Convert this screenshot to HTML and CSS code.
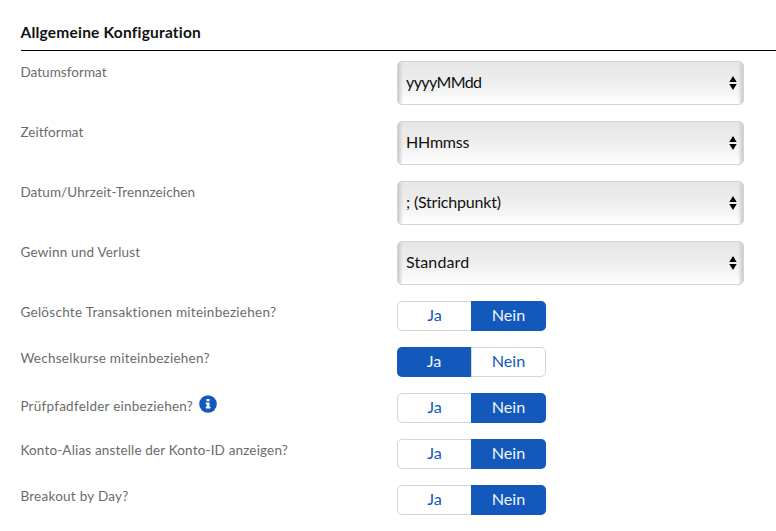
FILE: index.html
```html
<!DOCTYPE html>
<html lang="de">
<head>
<meta charset="utf-8">
<title>Allgemeine Konfiguration</title>
<link rel="stylesheet" href="styles.css">
</head>
<body>
<main class="config">
<h1>Allgemeine Konfiguration</h1>
<div class="row"><div class="label t-date">Datumsformat</div><div class="select"><span class="v-date">yyyyMMdd</span><svg class="arrows" viewBox="0 0 8 16"><path d="M4 1 7.7 7H.3ZM.3 9h7.4L4 15Z"/></svg></div></div>
<div class="row"><div class="label t-time">Zeitformat</div><div class="select"><span class="v-time">HHmmss</span><svg class="arrows" viewBox="0 0 8 16"><path d="M4 1 7.7 7H.3ZM.3 9h7.4L4 15Z"/></svg></div></div>
<div class="row"><div class="label t-sep">Datum/Uhrzeit-Trennzeichen</div><div class="select"><span class="v-sep">; (Strichpunkt)</span><svg class="arrows" viewBox="0 0 8 16"><path d="M4 1 7.7 7H.3ZM.3 9h7.4L4 15Z"/></svg></div></div>
<div class="row"><div class="label t-profit">Gewinn und Verlust</div><div class="select"><span class="v-standard">Standard</span><svg class="arrows" viewBox="0 0 8 16"><path d="M4 1 7.7 7H.3ZM.3 9h7.4L4 15Z"/></svg></div></div>
<div class="row"><div class="label t-deleted">Gelöschte Transaktionen miteinbeziehen?</div><div class="toggle"><span class="option">Ja</span><span class="option active">Nein</span></div></div>
<div class="row"><div class="label t-rates">Wechselkurse miteinbeziehen?</div><div class="toggle"><span class="option active">Ja</span><span class="option">Nein</span></div></div>
<div class="row"><div class="label with-info"><span class="t-audit">Prüfpfadfelder einbeziehen?</span><svg class="info" viewBox="0 0 18 18"><circle cx="9" cy="9" r="8.8" fill="#1359bc"/><path fill="#fff" d="M7.5 3.9h3v2.4h-3ZM6.8 7.4h3.7v4.4h.9v1.8H6.8v-1.8h.9V9.2h-.9Z"/></svg></div><div class="toggle"><span class="option">Ja</span><span class="option active">Nein</span></div></div>
<div class="row"><div class="label t-alias">Konto-Alias anstelle der Konto-ID anzeigen?</div><div class="toggle"><span class="option">Ja</span><span class="option active">Nein</span></div></div>
<div class="row"><div class="label t-break">Breakout by Day?</div><div class="toggle"><span class="option">Ja</span><span class="option active">Nein</span></div></div>
</main>
</body>
</html>
```
FILE: styles.css
```css
* { box-sizing: border-box; }
body {
  margin: 0;
  background: #fff;
  font-family: Lato, "Liberation Sans", sans-serif;
  font-variant-ligatures: none;
  overflow: hidden;
}
.config { padding: 21px 0 0 21px; }
h1 {
  margin: 0 0 10px;
  height: 30px;
  border-bottom: 1px solid #000;
  font-size: 15.5px;
  line-height: 22px;
  font-weight: 700;
  letter-spacing: 0.21px;
  text-indent: -0.5px;
  color: #111;
}
.row {
  display: grid;
  grid-template-columns: 376px 347px;
  align-items: start;
  margin-bottom: 16px;
}
.label {
  font-size: 13.5px;
  line-height: 18px;
  padding-top: 2px;
  text-indent: -0.6px;
  color: #6b6b6b;
  white-space: nowrap;
}
.t-date { letter-spacing: 0.05px; }
.t-time { letter-spacing: 0.03px; }
.t-sep { letter-spacing: 0.1px; }
.t-profit { letter-spacing: 0.2px; }
.t-deleted { letter-spacing: 0.28px; }
.t-rates { letter-spacing: 0.25px; }
.t-audit { letter-spacing: 0.24px; }
.t-alias { letter-spacing: 0.16px; }
.t-break { letter-spacing: 0.25px; }
.v-date { letter-spacing: -0.6px; }
.v-time { letter-spacing: -0.2px; }
.v-sep { letter-spacing: -0.2px; }
.v-standard { letter-spacing: 0.12px; }
.with-info {
  display: flex;
  align-items: center;
  gap: 6px;
  height: 22px;
  padding-top: 0;
}
.with-info span { padding-top: 4px; }
.info { width: 18px; height: 18px; }
.select {
  height: 44px;
  display: flex;
  align-items: center;
  justify-content: space-between;
  padding: 0 6px 0 8px;
  border: 1px solid #d4d4d4;
  border-radius: 5px;
  background: linear-gradient(90deg, #cbcbcb, rgba(203, 203, 203, 0) 5px calc(100% - 5px), #cbcbcb), linear-gradient(#e6e6e6, #eeeeee 50%, #fff);
  font-size: 16px;
  line-height: 22px;
  color: #111;
}
.select span { padding-bottom: 2px; }
.arrows { width: 8px; height: 16px; fill: #000; }
.toggle {
  display: flex;
  width: 149px;
  height: 30px;
  border: 1px solid #d5d6d8;
  border-radius: 5px;
}
.option {
  flex: 0 0 73px;
  height: 28px;
  font-size: 16.2px;
  line-height: 26px;
  text-align: center;
  color: #1359bc;
}
.option:last-child {
  flex-basis: 74px;
  border-left: 1px solid #d5d6d8;
}
.option.active {
  flex-basis: 74px;
  height: 30px;
  margin: -1px 0 -1px -1px;
  line-height: 28px;
  background: #1359bc;
  color: #f0f5fc;
}
.option.active:first-child { border-radius: 5px 0 0 5px; }
.option.active:last-child {
  flex-basis: 75px;
  margin: -1px -1px -1px 0;
  border: 0;
  border-radius: 0 5px 5px 0;
}
```
